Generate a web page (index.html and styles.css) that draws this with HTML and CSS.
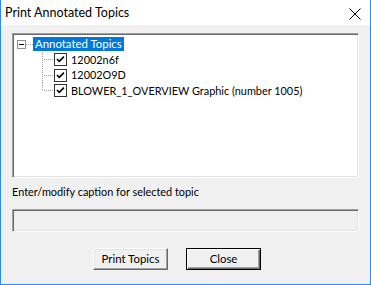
FILE: index.html
```html
<!DOCTYPE html>
<html>
<head>
<meta charset="utf-8">
<link rel="stylesheet" href="styles.css">
</head>
<body>
<div class="window">
  <div class="titlebar">
    <span class="title">Print Annotated Topics</span>
    <svg class="close-x" width="12" height="12" viewBox="0 0 12 12"><path d="M0.5 0.5 L11.5 11.5 M11.5 0.5 L0.5 11.5" stroke="#000" stroke-width="1" fill="none"/></svg>
  </div>
  <div class="content">
    <div class="tree">
      <div class="row root">
        <span class="expander"><span class="minus"></span></span>
        <span class="hdots"></span>
        <span class="label selected">Annotated Topics</span>
      </div>
      <div class="row child">
        <span class="conn"></span>
        <span class="check"><svg width="11" height="11" viewBox="0 0 11 11"><path d="M2 5 L4.2 7.4 L9 2.6" stroke="#000" stroke-width="1.6" fill="none"/></svg></span>
        <span class="label">12002n6f</span>
      </div>
      <div class="row child">
        <span class="conn"></span>
        <span class="check"><svg width="11" height="11" viewBox="0 0 11 11"><path d="M2 5 L4.2 7.4 L9 2.6" stroke="#000" stroke-width="1.6" fill="none"/></svg></span>
        <span class="label">12002O9D</span>
      </div>
      <div class="row child last">
        <span class="conn"></span>
        <span class="check"><svg width="11" height="11" viewBox="0 0 11 11"><path d="M2 5 L4.2 7.4 L9 2.6" stroke="#000" stroke-width="1.6" fill="none"/></svg></span>
        <span class="label">BLOWER_1_OVERVIEW Graphic (number 1005)</span>
      </div>
    </div>
    <div class="caption-label">Enter/modify caption for selected topic</div>
    <div class="textbox"></div>
    <div class="buttons">
      <button class="btn">Print Topics</button>
      <button class="btn default">Close</button>
    </div>
  </div>
</div>
</body>
</html>
```
FILE: styles.css
```css
* { box-sizing: border-box; }
html, body { margin: 0; padding: 0; background: #f0f0f0; }
body { font-family: Lato, "Liberation Sans", sans-serif; font-size: 10.9px; color: #000; }

.window {
  width: 371px;
  height: 285px;
  border: 1px solid #2a8cf0;
  border-top: none;
  background: #f0f0f0;
  display: flex;
  flex-direction: column;
}

.titlebar {
  height: 25px;
  background: #fff;
  display: flex;
  align-items: center;
  justify-content: space-between;
  padding: 0 9px 0 4px;
}
.title { font-size: 12.5px; line-height: 16px; padding-top: 1px; }
.close-x { display: block; margin-top: 2px; }

.content {
  display: flex;
  flex-direction: column;
  padding: 8px 11px 0 11px;
}

.tree {
  height: 145px;
  background: #fff;
  border-top: 1px solid #a0a0a0;
  border-left: 1px solid #a0a0a0;
  border-right: 1px solid #fff;
  border-bottom: 1px solid #fff;
  box-shadow: inset 1px 1px 0 #696969, inset -1px -1px 0 #e3e3e3;
  padding: 2px 0 0 4px;
  display: flex;
  flex-direction: column;
}

.row { display: flex; align-items: center; height: 15px; }
.row.root { height: 16px; }
.row.child { height: 15.6px; }

.expander {
  width: 9px; height: 9px;
  border: 1px solid #919191;
  display: flex; align-items: center; justify-content: center;
  background: #fff;
}
.minus { width: 5px; height: 1px; background: #000; }
.hdots {
  width: 7px; height: 1px;
  background: repeating-linear-gradient(to right, #a0a0a0 0 1px, transparent 1px 2px);
}
.label { padding: 0 2px; line-height: 14px; white-space: nowrap; }
.label.selected { background: #0078d7; color: #fff; font-size: 11.4px; }

.conn {
  width: 14px;
  height: 100%;
  margin-left: 23px;
  background:
    repeating-linear-gradient(to bottom, #a0a0a0 0 1px, transparent 1px 2px) 2px 0 / 1px 100% no-repeat,
    repeating-linear-gradient(to right, #a0a0a0 0 1px, transparent 1px 2px) 4px 50% / 9px 1px no-repeat;
}
.row.last .conn {
  background:
    repeating-linear-gradient(to bottom, #a0a0a0 0 1px, transparent 1px 2px) 2px 0 / 1px 50% no-repeat,
    repeating-linear-gradient(to right, #a0a0a0 0 1px, transparent 1px 2px) 4px 50% / 9px 1px no-repeat;
}
.check {
  width: 13px; height: 13px;
  border: 1px solid #333;
  background: #fff;
  display: flex; align-items: center; justify-content: center;
  margin-right: 2px;
}
.check svg { display: block; }

.caption-label { margin-top: 6px; line-height: 16px; height: 16px; }

.textbox {
  margin-top: 9px;
  height: 23px;
  background: #f0f0f0;
  border-top: 1px solid #a0a0a0;
  border-left: 1px solid #a0a0a0;
  border-right: 1px solid #fff;
  border-bottom: 1px solid #fff;
  box-shadow: inset 1px 1px 0 #696969, inset -1px -1px 0 #e3e3e3;
}

.buttons {
  display: flex;
  gap: 18px;
  margin-top: 16px;
  padding-left: 81px;
}
.btn {
  width: 75px;
  height: 22px;
  font: inherit;
  font-size: 11.4px;
  color: #000;
  background: #f0f0f0;
  border-top: 1px solid #fff;
  border-left: 1px solid #fff;
  border-right: 1px solid #696969;
  border-bottom: 1px solid #696969;
  box-shadow: inset -1px -1px 0 #a0a0a0, inset 1px 1px 0 #e3e3e3;
  padding: 0;
  line-height: 18px;
}
.btn.default {
  border: 1px solid #000;
  box-shadow: inset 1px 1px 0 #fff, inset -1px -1px 0 #696969, inset -2px -2px 0 #a0a0a0;
}
```
